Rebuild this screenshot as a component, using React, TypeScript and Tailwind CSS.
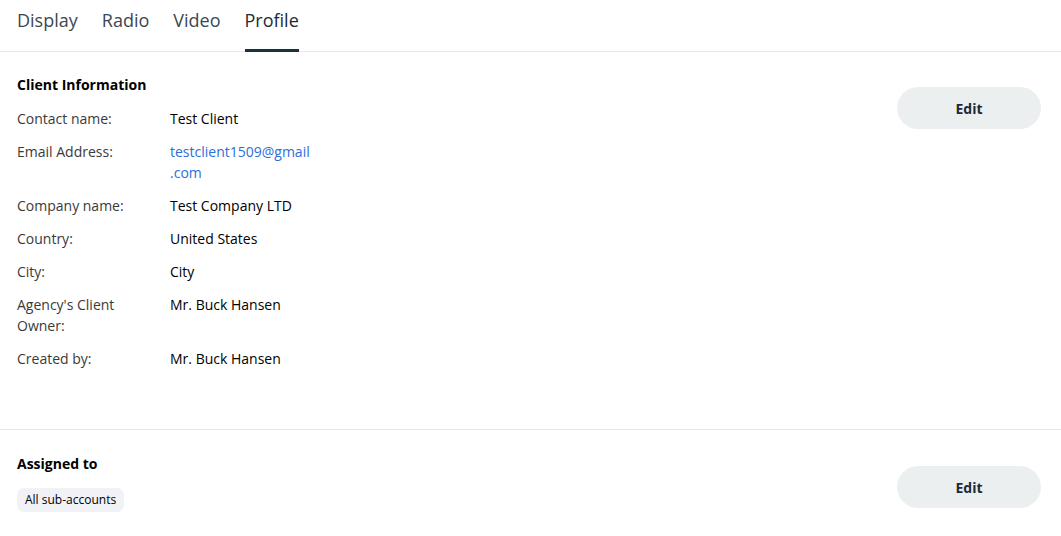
const tabs = ["Display", "Radio", "Video", "Profile"];

const rows: { label: string; value: string; link?: boolean }[] = [
  { label: "Contact name:", value: "Test Client" },
  { label: "Email Address:", value: "testclient1509@gmail.com", link: true },
  { label: "Company name:", value: "Test Company LTD" },
  { label: "Country:", value: "United States" },
  { label: "City:", value: "City" },
  { label: "Agency's Client Owner:", value: "Mr. Buck Hansen" },
  { label: "Created by:", value: "Mr. Buck Hansen" },
];

function EditButton() {
  return (
    <button className="w-[144px] h-[42px] rounded-full bg-[#eceff0] text-[14px] font-bold text-[#1c2b36]">
      Edit
    </button>
  );
}

export default function App() {
  return (
    <div
      className="w-[1061px] h-[536px] bg-white overflow-hidden text-[#1a1a1a]"
      style={{ fontFamily: '"Open Sans", "Liberation Sans", sans-serif' }}
    >
      <nav className="flex gap-[24px] px-[17px] h-[52px] border-b border-[#e8e8e8]">
        {tabs.map((t) => (
          <div
            key={t}
            className={
              t === "Profile"
                ? "relative flex items-start pt-[7px] text-[18px] text-[#1c2b36]"
                : "relative flex items-start pt-[7px] text-[18px] text-[#3a4852]"
            }
          >
            {t}
            {t === "Profile" && (
              <span className="absolute left-0 right-0 bottom-[-1px] h-[3px] bg-[#16333f]" />
            )}
          </div>
        ))}
      </nav>

      <section className="flex justify-between pl-[17px] pr-[20px] pt-[24px] h-[378px] border-b border-[#e8e8e8]">
        <div>
          <h2 className="text-[14px] font-bold leading-[18px] text-black">Client Information</h2>
          <div className="mt-[14px] grid grid-cols-[140px_145px] gap-x-[13px] gap-y-[12px] text-[14px] leading-[21px]">
            {rows.map((r) => (
              <div key={r.label} className="contents">
                <div className="text-[#3a3a3a]">{r.label}</div>
                <div className={r.link ? "text-[#2a6fdb]" : "text-black"}>
                  {r.link ? (
                    <>
                      testclient1509@gmail
                      <br />
                      .com
                    </>
                  ) : (
                    r.value
                  )}
                </div>
              </div>
            ))}
          </div>
        </div>
        <div className="pt-[11px]">
          <EditButton />
        </div>
      </section>

      <section className="flex justify-between pl-[17px] pr-[20px] pt-[25px]">
        <div>
          <h2 className="text-[14px] font-bold leading-[18px] text-black">Assigned to</h2>
          <span className="mt-[15px] inline-block rounded-[7px] bg-[#f1f2f5] px-[8px] py-[3px] text-[12px] leading-[18px] text-black">
            All sub-accounts
          </span>
        </div>
        <div className="pt-[11px]">
          <EditButton />
        </div>
      </section>
    </div>
  );
}
